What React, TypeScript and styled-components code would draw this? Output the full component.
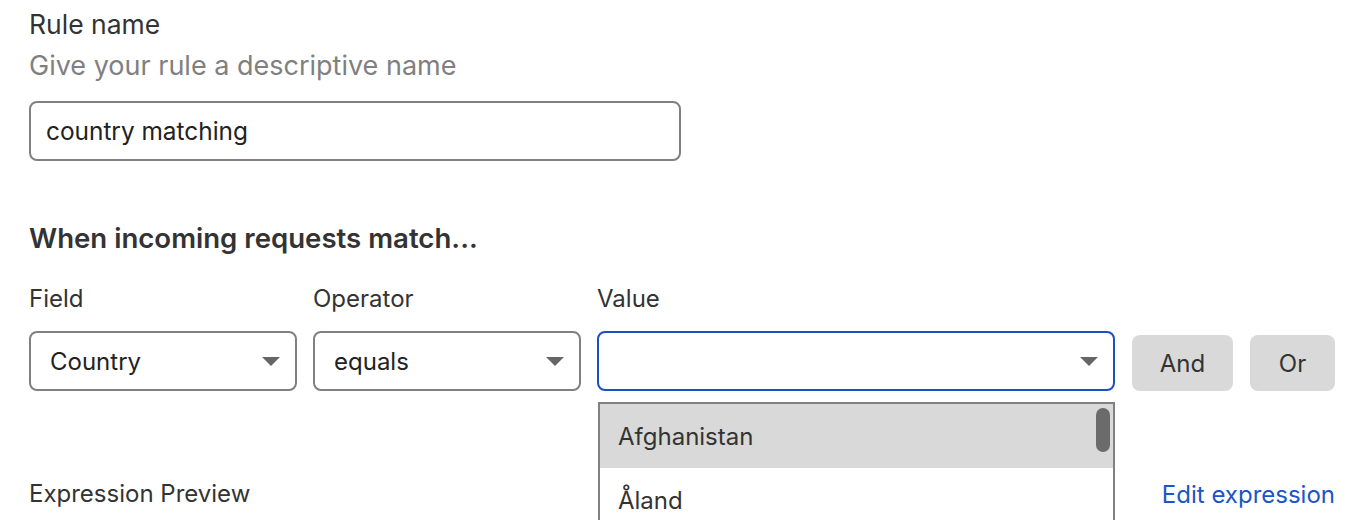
import React from "react";
import styled, { createGlobalStyle } from "styled-components";

const Global = createGlobalStyle`
  html, body { margin: 0; padding: 0; background: #fff; }
  body { font-family: Inter, "Noto Sans", sans-serif; color: #333; overflow: hidden; }
  * { box-sizing: border-box; }
`;

const Page = styled.div`
  width: 1358px;
  height: 520px;
  padding: 8px 23px 0 29px;
  overflow: hidden;
`;

const Label = styled.div<{ $big?: boolean }>`
  font-size: ${(p) => (p.$big ? 26.5 : 24)}px;
  line-height: 32px;
  color: #333;
`;

const Hint = styled.div`
  font-size: 27px;
  line-height: 32px;
  color: #808080;
  margin-top: 10px;
`;

const TextInput = styled.div`
  margin-top: 19px;
  width: 652px;
  height: 60px;
  border: 2px solid #808080;
  border-radius: 8px;
  display: flex;
  align-items: center;
  padding: 0 15px;
  font-size: 24.4px;
  color: #222;
`;

const Heading = styled.h2`
  margin: 60px 0 0;
  font-size: 27.6px;
  line-height: 34px;
  font-weight: 600;
  color: #333;
`;

const Row = styled.div`
  display: flex;
  gap: 16px;
  margin-top: 28px;
  align-items: flex-start;
`;

const Col = styled.div<{ $w: number }>`
  width: ${(p) => p.$w}px;
  display: flex;
  flex-direction: column;
  gap: 16px;
  position: relative;
`;

const Select = styled.div<{ $focus?: boolean }>`
  height: 60px;
  border: 2px solid ${(p) => (p.$focus ? "#1c50c2" : "#808080")};
  border-radius: 8px;
  display: flex;
  align-items: center;
  justify-content: space-between;
  padding: 0 15px 0 19px;
  font-size: 24px;
  color: #222;
`;

const Arrow = styled.span`
  width: 0;
  height: 0;
  border-left: 9px solid transparent;
  border-right: 9px solid transparent;
  border-top: 9px solid #666;
  margin-top: 1px;
`;

const Buttons = styled.div`
  display: flex;
  gap: 17px;
  margin-top: 52px;
  margin-left: 1px;
`;

const Button = styled.button<{ $w: number }>`
  width: ${(p) => p.$w}px;
  height: 56px;
  border: none;
  border-radius: 8px;
  background: #d9d9d9;
  font-family: inherit;
  font-size: 24px;
  color: #333;
  padding: 0;
`;

const Menu = styled.div`
  position: absolute;
  top: 119px;
  left: 1px;
  width: 517px;
  height: 140px;
  border: 2px solid #808080;
  border-bottom: none;
  background: #fff;
  overflow: hidden;
  z-index: 2;
`;

const Option = styled.div<{ $active?: boolean }>`
  height: 64px;
  display: flex;
  align-items: center;
  padding: 0 18px;
  font-size: 24px;
  color: #333;
  background: ${(p) => (p.$active ? "#d9d9d9" : "#fff")};
`;

const Thumb = styled.div`
  position: absolute;
  top: 4px;
  right: 3px;
  width: 14px;
  height: 44px;
  border-radius: 7px;
  background: #6b6b6b;
`;

const Footer = styled.div`
  display: flex;
  justify-content: space-between;
  align-items: center;
  margin-top: 87px;
`;

const Link = styled.a`
  font-size: 24px;
  color: #1b55c7;
  text-decoration: none;
`;

export default function App() {
  return (
    <>
      <Global />
      <Page>
        <Label $big>Rule name</Label>
        <Hint>Give your rule a descriptive name</Hint>
        <TextInput>country matching</TextInput>
        <Heading>When incoming requests match...</Heading>
        <Row>
          <Col $w={268}>
            <Label>Field</Label>
            <Select>
              Country
              <Arrow />
            </Select>
          </Col>
          <Col $w={268}>
            <Label>Operator</Label>
            <Select>
              equals
              <Arrow />
            </Select>
          </Col>
          <Col $w={518}>
            <Label>Value</Label>
            <Select $focus>
              <span />
              <Arrow />
            </Select>
            <Menu>
              <Option $active>Afghanistan</Option>
              <Option>Åland</Option>
              <Thumb />
            </Menu>
          </Col>
          <Buttons>
            <Button $w={101}>And</Button>
            <Button $w={85}>Or</Button>
          </Buttons>
        </Row>
        <Footer>
          <Label>Expression Preview</Label>
          <Link href="#">Edit expression</Link>
        </Footer>
      </Page>
    </>
  );
}
